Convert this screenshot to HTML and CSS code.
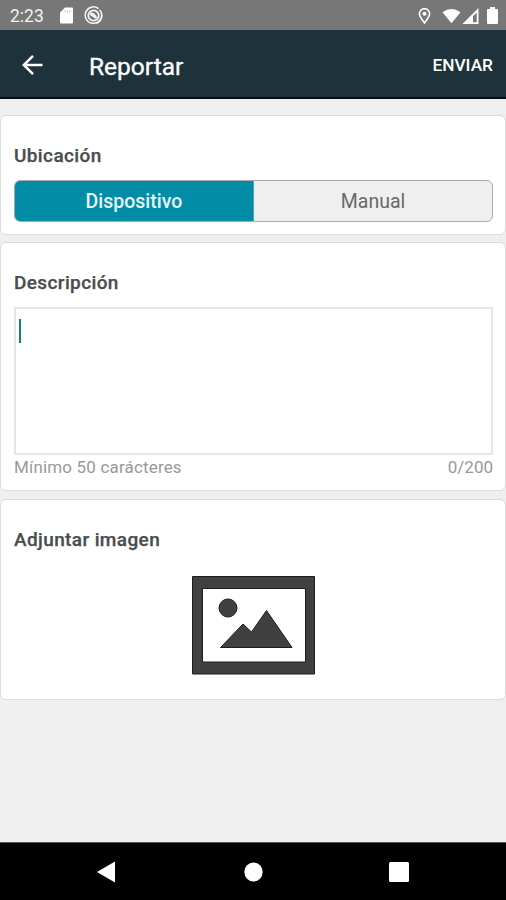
FILE: index.html
```html
<!DOCTYPE html>
<html lang="es">
<head>
<meta charset="utf-8">
<title>Reportar</title>
<link rel="stylesheet" href="styles.css">
</head>
<body>
<div class="screen">
  <div class="status">
    <span class="clock">2:23</span>
    <svg class="icon-sd" width="13" height="17" viewBox="0 0 13 17"><path fill="#fff" d="M5 .5h7q1 0 1 1v14q0 1-1 1H1q-1 0-1-1V5.500z"/><path stroke="#ccc" d="M5 3v2.500M7.500 3v2.500M10 3v2.500"/></svg>
    <svg class="icon-sync" width="19" height="19" viewBox="0 0 19 19" fill="none" stroke="#f4f4f4"><path stroke-width="1.500" d="M14.500 2.700A8.200 8.200 0 1 0 17.300 7M12 17.300A8.200 8.200 0 0 0 15.500 3.700"/><circle cx="9.500" cy="9.500" r="5.200" stroke-width="1.800"/><path stroke-width="1.600" d="M6.500 7.500q3-1 6 4.500M6 8l6 4"/></svg>
    <span class="spacer"></span>
    <svg width="13" height="16" viewBox="0 0 12 16" fill="none" stroke="#fff"><path stroke-width="1.600" d="M6 15C3.500 11.500.9 8.700.9 5.800a5.100 5.100 0 0 1 10.200 0C11.100 8.700 8.500 11.500 6 15z"/><circle cx="6" cy="5.800" r="2" fill="#fff" stroke="none"/></svg>
    <svg class="icon-wifi" width="19" height="16" viewBox="0 0 20 16"><path fill="#fff" d="M.5 4Q10-3 19.500 4L10 15.500z"/></svg>
    <svg class="icon-signal" width="17" height="16" viewBox="0 0 17 16"><path fill="#fff" fill-rule="evenodd" d="M16.500 0v16H.5zM14.700 4.500 11 8.200v6h3.700z"/></svg>
    <svg class="icon-battery" width="11" height="17" viewBox="0 0 11 17"><path fill="#fff" d="M3 0h5v2h2q1 0 1 1v13q0 1-1 1H1q-1 0-1-1V3q0-1 1-1h2z"/></svg>
  </div>
  <header class="appbar">
    <svg width="22" height="22" viewBox="0 0 22 22" fill="none" stroke="#fff" stroke-width="2.500"><path d="M20.500 11H2.500M11 1.800 1.800 11l9.200 9.200"/></svg>
    <h1>Reportar</h1>
    <span class="send">ENVIAR</span>
  </header>
  <main>
    <section class="card location">
      <h2>Ubicación</h2>
      <div class="segmented">
        <div class="segment active">Dispositivo</div>
        <div class="segment">Manual</div>
      </div>
    </section>
    <section class="card description">
      <h2>Descripción</h2>
      <div class="textbox"><span class="caret"></span></div>
      <div class="hint"><span class="minimum">Mínimo 50 carácteres</span><span>0/200</span></div>
    </section>
    <section class="card attach">
      <h2>Adjuntar imagen</h2>
      <svg class="picture" width="123" height="99" viewBox="0 0 123 99"><g fill="#404040" stroke="#1c1c1c"><path fill-rule="evenodd" d="M.5.5h122v97.500H.5zM10.500 12.500v73.500h103V12.500z"/><circle cx="36" cy="32" r="9"/><path d="M28.500 71.500 51 48l8.500 8L74.500 34.500l25.500 37z"/></g></svg>
    </section>
  </main>
  <nav class="navbar">
    <svg width="18" height="22" viewBox="0 0 18 22"><path fill="#fff" d="M18 .5v21L0 11z"/></svg>
    <svg class="nav-home" width="19" height="20" viewBox="0 0 19 20"><ellipse cx="9.500" cy="10" rx="9.200" ry="9.500" fill="#fff"/></svg>
    <svg class="nav-recent" width="20" height="20" viewBox="0 0 20 20"><rect width="20" height="20" rx="1.500" fill="#fff"/></svg>
  </nav>
</div>
</body>
</html>
```
FILE: styles.css
```css
* { box-sizing: border-box; }
body { margin: 0; font-family: Roboto, sans-serif; }
svg { display: block; flex: none; }
h1, h2 { margin: 0; }
.screen {
  width: 506px;
  height: 900px;
  display: flex;
  flex-direction: column;
  background: #efefef;
  overflow: hidden;
}
.status {
  height: 30px;
  flex: none;
  display: flex;
  align-items: center;
  padding: 1px 8px 0 10px;
  background: #777;
  color: #f2f2f2;
}
.clock { width: 50px; font-size: 17.500px; }
.icon-sync { margin-left: 11px; }
.spacer { flex: 1; }
.icon-wifi { margin-left: 11px; }
.icon-signal { margin-left: 1px; }
.icon-battery { margin-left: 8px; }
.appbar {
  height: 69px;
  flex: none;
  display: flex;
  align-items: center;
  padding: 2px 13px 0 22px;
  background: #1d323a;
  border-bottom: 2px solid #060e14;
  color: #fff;
}
.appbar h1 { margin-left: 45px; padding-top: 3px; font-size: 24.500px; font-weight: 400; -webkit-text-stroke: .3px #fff; }
.send { margin-left: auto; padding-top: 1px; font-size: 17.300px; font-weight: 500; }
main { flex: 1; padding-top: 16px; display: flex; flex-direction: column; }
.card {
  background: #fff;
  border: 1px solid #dcdcdc;
  border-radius: 6px;
  padding: 0 12px 0 14px;
}
.card h2 { margin-left: -1px; color: #484d4f; font-size: 19px; font-weight: 500; line-height: 24px; letter-spacing: .38px; -webkit-text-stroke: .25px #484d4f; }
.location { height: 120px; padding-top: 28px; }
.description { height: 249px; margin-top: 7px; padding-top: 28px; }
.attach { height: 201px; margin-top: 8px; padding-top: 28px; }
.segmented {
  display: flex;
  height: 42px;
  margin: 12px 0 0 -1px;
  border: 1px solid #aaa;
  border-radius: 6px;
  background: #efefef;
  overflow: hidden;
}
.segment { flex: 1; display: flex; align-items: center; justify-content: center; color: #696969; font-size: 19.500px; padding-top: 1px; }
.active { background: #028ca5; color: #e4f8fb; font-weight: 500; border-right: 1px solid #5f9cb0; }
.textbox { height: 148px; margin: 12px 0 0 -1px; padding: 10px 3px; border: 2px solid #e6e6e6; }
.caret { display: block; width: 2px; height: 24px; background: #16806f; }
.hint { display: flex; justify-content: space-between; margin-left: -1px; color: #999; font-size: 17px; line-height: 24px; }
.minimum { letter-spacing: .17px; }
.picture { margin: 24px auto 0 177px; }
.navbar { height: 58px; flex: none; display: flex; align-items: center; padding-left: 97px; background: #000; border-top: 1px solid #555; }
.nav-home { margin-left: 129px; }
.nav-recent { margin-left: 126px; }
```
